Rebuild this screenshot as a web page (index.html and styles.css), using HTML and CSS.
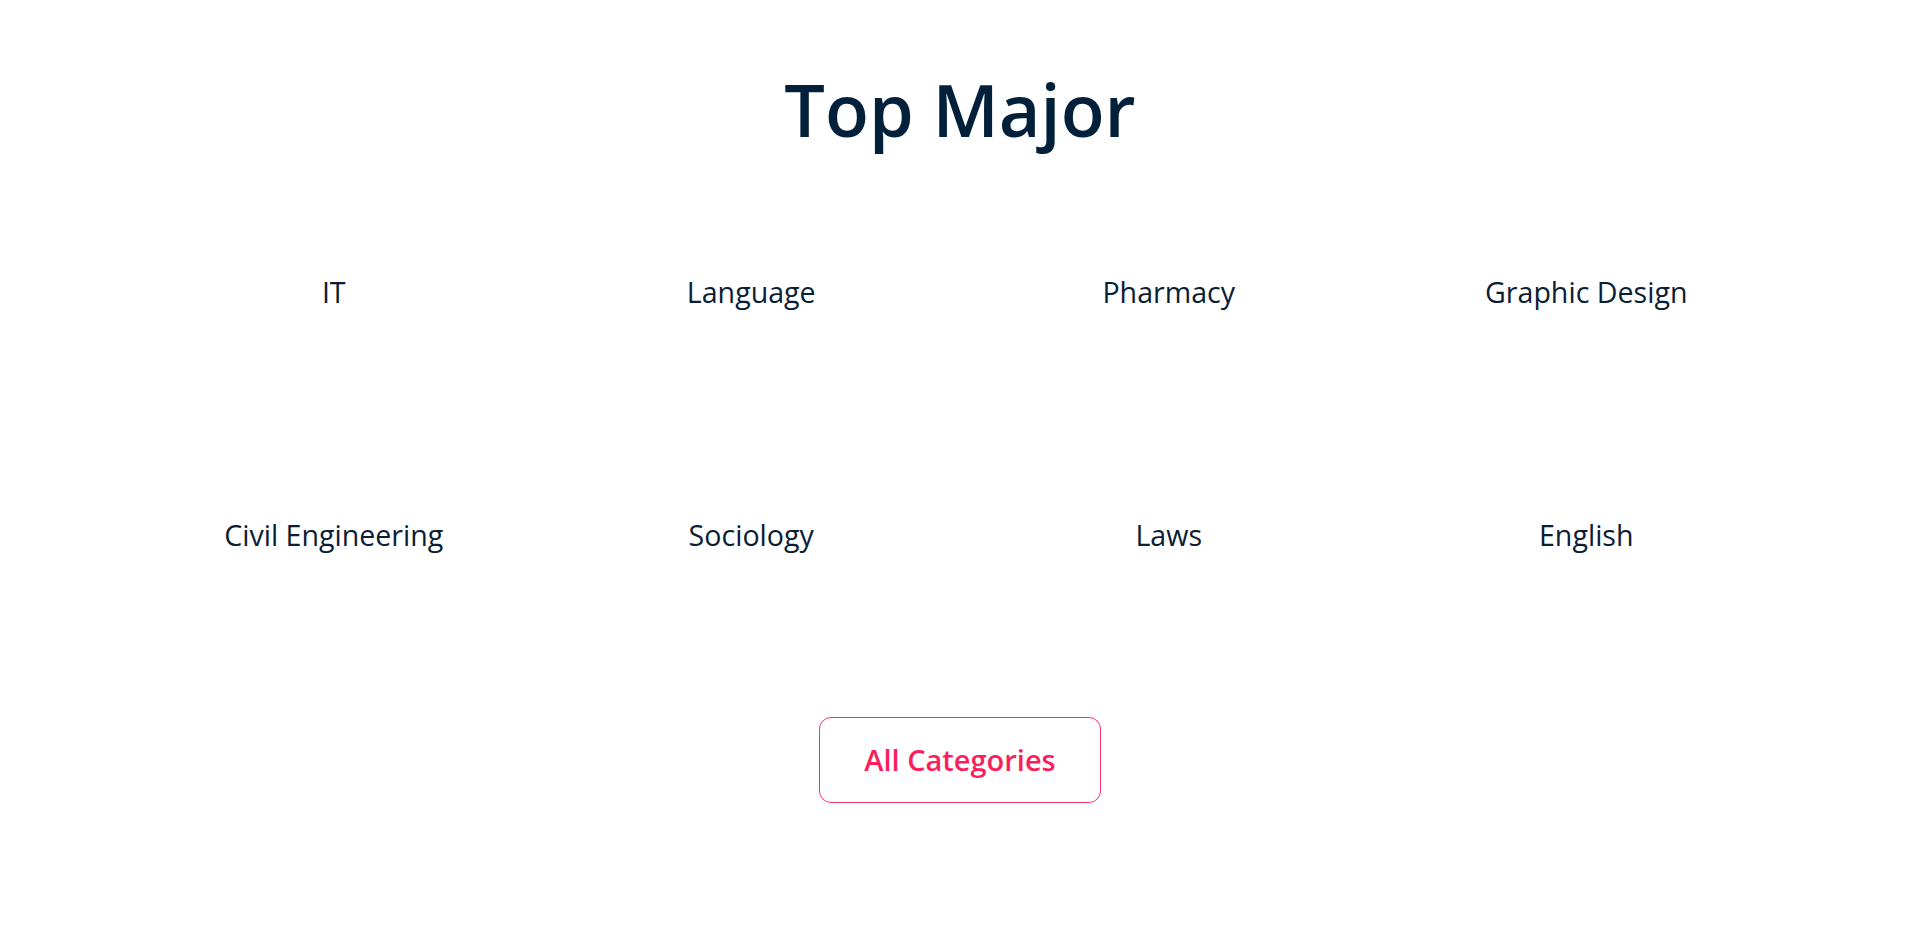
FILE: index.html
```html
<!DOCTYPE html>
<html lang="en">
<head>
<meta charset="utf-8">
<title>Top Major</title>
<link rel="stylesheet" href="styles.css">
</head>
<body>
<section class="majors">
  <h2 class="majors-title">Top Major</h2>
  <div class="majors-grid">
    <a class="major" href="#">IT</a>
    <a class="major" href="#">Language</a>
    <a class="major" href="#">Pharmacy</a>
    <a class="major" href="#">Graphic Design</a>
    <a class="major" href="#">Civil Engineering</a>
    <a class="major" href="#">Sociology</a>
    <a class="major" href="#">Laws</a>
    <a class="major" href="#">English</a>
  </div>
  <div class="majors-actions">
    <a class="btn-outline" href="#">All Categories</a>
  </div>
</section>
</body>
</html>
```
FILE: styles.css
```css
* { box-sizing: border-box; }
html, body {
  margin: 0;
  padding: 0;
  background: #ffffff;
}
body {
  font-family: "Open Sans", "Noto Sans", sans-serif;
  color: #0a1e36;
}
.majors {
  padding-top: 66px;
  display: flex;
  flex-direction: column;
  align-items: center;
}
.majors-title {
  margin: 0;
  font-size: 72px;
  line-height: 86px;
  font-weight: 600;
  color: #03203b;
  letter-spacing: 0;
}
.majors-grid {
  width: 1670px;
  margin-top: 18px;
  display: grid;
  grid-template-columns: repeat(4, 1fr);
  grid-auto-rows: 243px;
}
.major {
  display: flex;
  align-items: center;
  justify-content: center;
  font-size: 28.6px;
  line-height: 42px;
  color: #0a1e36;
  text-decoration: none;
}
.majors-actions {
  margin-top: 61px;
  display: flex;
  justify-content: center;
}
.btn-outline {
  display: inline-block;
  width: 282px;
  height: 86px;
  padding-top: 22px;
  text-align: center;
  border: 1px solid #f2346d;
  border-radius: 12px;
  font-size: 29px;
  line-height: 40px;
  font-weight: 600;
  color: #fa1f5c;
  text-decoration: none;
}
```
